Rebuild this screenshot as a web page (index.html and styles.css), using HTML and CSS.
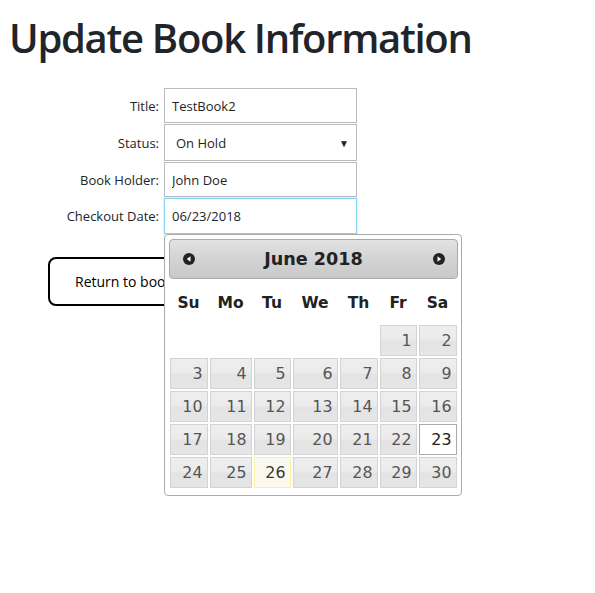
FILE: index.html
```html
<!DOCTYPE html>
<html lang="en">
<head>
<meta charset="utf-8">
<title>Update Book Information</title>
<link rel="stylesheet" href="styles.css">
</head>
<body>
<h1 class="page-title">Update Book Information</h1>
<form class="book-form">
  <label class="field-label" for="title">Title:</label>
  <input class="field-input" id="title" type="text" value="TestBook2">
  <label class="field-label" for="status">Status:</label>
  <div class="field-input select-box" id="status"><span>On Hold</span><span class="caret">▼</span></div>
  <label class="field-label" for="holder">Book Holder:</label>
  <input class="field-input" id="holder" type="text" value="John Doe">
  <label class="field-label" for="date">Checkout Date:</label>
  <div class="date-wrap">
    <input class="field-input focused" id="date" type="text" value="06/23/2018">
    <div class="datepicker">
      <div class="dp-header">
        <span class="dp-nav"><svg width="12" height="12" viewBox="0 0 12 12"><circle cx="6" cy="6" r="6" fill="#222"/><path d="M7.5 3.2 L3.8 6 L7.5 8.8 Z" fill="#fff"/></svg></span>
        <span class="dp-title">June 2018</span>
        <span class="dp-nav"><svg width="12" height="12" viewBox="0 0 12 12"><circle cx="6" cy="6" r="6" fill="#222"/><path d="M4.5 3.2 L8.2 6 L4.5 8.8 Z" fill="#fff"/></svg></span>
      </div>
      <table class="dp-table">
        <colgroup><col class="c40"><col class="c44"><col class="c39"><col class="c47"><col class="c40"><col class="c39"><col class="c40"></colgroup>
        <thead><tr><th>Su</th><th>Mo</th><th>Tu</th><th>We</th><th>Th</th><th>Fr</th><th>Sa</th></tr></thead>
        <tbody>
          <tr><td></td><td></td><td></td><td></td><td></td><td><a>1</a></td><td><a>2</a></td></tr>
          <tr><td><a>3</a></td><td><a>4</a></td><td><a>5</a></td><td><a>6</a></td><td><a>7</a></td><td><a>8</a></td><td><a>9</a></td></tr>
          <tr><td><a>10</a></td><td><a>11</a></td><td><a>12</a></td><td><a>13</a></td><td><a>14</a></td><td><a>15</a></td><td><a>16</a></td></tr>
          <tr><td><a>17</a></td><td><a>18</a></td><td><a>19</a></td><td><a>20</a></td><td><a>21</a></td><td><a>22</a></td><td><a class="active">23</a></td></tr>
          <tr><td><a>24</a></td><td><a>25</a></td><td><a class="today">26</a></td><td><a>27</a></td><td><a>28</a></td><td><a>29</a></td><td><a>30</a></td></tr>
        </tbody>
      </table>
    </div>
  </div>
</form>
<button class="return-btn" type="button">Return to book list</button>
</body>
</html>
```

FILE: styles.css
```css
html {
  min-height: 100%;
}
body {
  margin: 8px;
  min-height: 570px;
  font-family: "Open Sans", "Noto Sans", sans-serif;
  color: #212529;
  background: #fff;
}
.page-title {
  margin: 6px 0 0 1px;
  font-size: 40px;
  font-weight: 600;
  line-height: 48px;
  letter-spacing: -1.3px;
  color: #212529;
}
.book-form {
  margin-top: 26px;
  display: grid;
  grid-template-columns: 151px 193px;
  column-gap: 5px;
  row-gap: 1px;
  grid-template-rows: 35px 37px 35px 36px;
  font-size: 13px;
}
.field-label {
  text-align: right;
  align-self: center;
  color: #212529;
}
.field-input {
  box-sizing: border-box;
  width: 193px;
  height: 100%;
  margin: 0;
  border: 1px solid #bbb;
  padding: 0 7px;
  font: inherit;
  color: #212529;
  background: #fff;
  outline: none;
}
.select-box {
  display: flex;
  align-items: center;
  justify-content: space-between;
  padding: 0 7px 0 11px;
}
.caret {
  font-size: 10px;
  color: #222;
}
.date-wrap {
  position: relative;
  height: 36px;
}
.focused {
  border-color: #86d3ec;
  box-shadow: 0 0 2px rgba(102, 200, 236, 0.6);
}
.datepicker {
  position: absolute;
  left: 0;
  top: 36px;
  z-index: 2;
  box-sizing: border-box;
  width: 298px;
  padding: 3.5px 3.5px 6.5px;
  border: 1px solid #aaa;
  border-radius: 4px;
  background: #fff;
  font-family: "DejaVu Sans", Verdana, sans-serif;
  font-size: 17.6px;
}
.dp-header {
  box-sizing: border-box;
  height: 40px;
  display: flex;
  align-items: center;
  justify-content: space-between;
  padding: 0 12px 0 13px;
  border: 1px solid #aaa;
  border-radius: 4px;
  background: linear-gradient(#e2e2e2, #d3d3d3 50%, #c9c9c9);
  color: #222;
}
.dp-nav {
  display: flex;
  width: 12px;
  height: 12px;
}
.dp-title {
  font-weight: bold;
  font-size: 17.6px;
}
.dp-table {
  width: 289px;
  border-collapse: collapse;
  table-layout: fixed;
  font-size: 15.84px;
  margin: 0;
}
.c40 { width: 40px; }
.c44 { width: 44px; }
.c39 { width: 39px; }
.c47 { width: 47px; }
.dp-table th {
  height: 45px;
  padding: 4px 0 0;
  box-sizing: border-box;
  font-weight: bold;
  color: #222;
  text-align: center;
  font-size: 15.5px;
}
.dp-table td {
  padding: 1px;
  height: 31px;
}
.dp-table td a {
  display: block;
  box-sizing: border-box;
  height: 31px;
  line-height: 29px;
  padding: 0 4px 0 0;
  text-align: right;
  border: 1px solid #d3d3d3;
  background: linear-gradient(#eeeeee, #ebebeb 45%, #e3e3e3 55%, #e6e6e6);
  color: #555;
}
.dp-table td a.today {
  border-color: #fcefa1;
  background: #fbf9ee;
  color: #363636;
}
.dp-table td a.active {
  border-color: #aaa;
  background: #fff;
  color: #212121;
}
.return-btn {
  display: block;
  margin: 23px 0 0 40px;
  height: 49px;
  padding: 0 24px 0 25px;
  border: 2px solid #000;
  border-radius: 8px;
  background: #fff;
  font-family: "Open Sans", sans-serif;
  font-size: 14px;
  color: #000;
}
```
